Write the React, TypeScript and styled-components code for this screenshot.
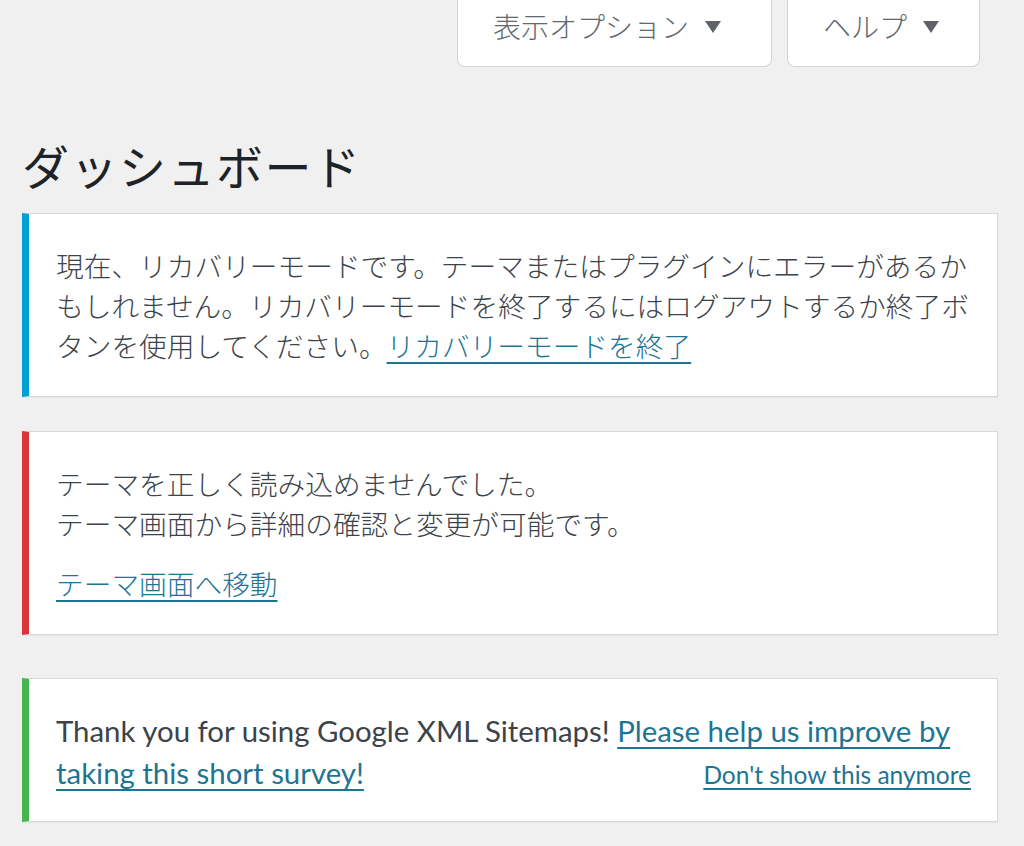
import React from "react";
import styled, { createGlobalStyle } from "styled-components";

const Global = createGlobalStyle`
  html, body {
    margin: 0;
    padding: 0;
    background: #f0f0f1;
  }
  body {
    font-family: "Noto Sans CJK JP", "Noto Sans", sans-serif;
    color: #3c434a;
  }
`;

const Page = styled.div`
  min-height: 846px;
  background: #f0f0f1;
  overflow: hidden;
`;

const MetaLinks = styled.div`
  display: flex;
  justify-content: flex-end;
  gap: 15px;
  padding-right: 44px;
`;

const MetaButton = styled.button<{ $w: number }>`
  display: flex;
  align-items: center;
  justify-content: flex-start;
  gap: 16px;
  width: ${(p) => p.$w}px;
  height: 67px;
  padding: 0 0 14px 35px;
  box-sizing: border-box;
  background: #fff;
  border: 1.5px solid #d2d3d5;
  border-top: none;
  border-radius: 0 0 8px 8px;
  font-family: "Noto Sans CJK JP", sans-serif;
  font-size: 28px;
  font-weight: 300;
  color: #646970;
  cursor: pointer;
`;

const Arrow = styled.span`
  display: inline-block;
  width: 0;
  height: 0;
  margin-top: 2px;
  border-left: 8px solid transparent;
  border-right: 8px solid transparent;
  border-top: 12px solid #5f6368;
`;

const Content = styled.div`
  padding: 0 26px 0 22px;
`;

const Heading = styled.h1`
  margin: 68px 0 18px 0;
  font-family: "Noto Sans CJK JP", sans-serif;
  font-size: 47px;
  font-weight: 400;
  line-height: 60px;
  color: #1d2327;
  letter-spacing: 1.5px;
`;

const Notice = styled.div<{ $color: string; $gap?: number }>`
  background: #fff;
  border: 1.5px solid #d7d8da;
  border-left: 7px solid ${(p) => p.$color};
  box-shadow: 0 1px 1px rgba(0, 0, 0, 0.04);
  padding: 11px 26px 11px 27px;
  margin-bottom: ${(p) => p.$gap ?? 0}px;
`;

const Para = styled.p`
  margin: 20px 0;
  font-family: "Noto Sans CJK JP", sans-serif;
  font-size: 27.7px;
  font-weight: 300;
  line-height: 40px;
  color: #3c434a;
`;

const EnPara = styled.p`
  margin: 20px 0 14px 0;
  font-family: "Lato", "Noto Sans", sans-serif;
  font-size: 29.4px;
  line-height: 42px;
  color: #3c434a;
  &::after {
    content: "";
    display: block;
    clear: both;
  }
`;

const Link = styled.a`
  color: #1e7493;
  text-decoration: underline;
  text-underline-offset: 5px;
  text-decoration-thickness: 2px;
`;

const SmallLink = styled.a`
  float: right;
  margin-top: 2px;
  font-size: 24.5px;
  line-height: 42px;
  color: #1e7493;
  text-decoration: underline;
  text-underline-offset: 4px;
  text-decoration-thickness: 1.5px;
`;

export default function App() {
  return (
    <Page>
      <Global />
      <MetaLinks>
        <MetaButton $w={315}>
          表示オプション
          <Arrow />
        </MetaButton>
        <MetaButton $w={193}>
          ヘルプ
          <Arrow />
        </MetaButton>
      </MetaLinks>
      <Content>
        <Heading>ダッシュボード</Heading>
        <Notice $color="#00a0d2" $gap={34}>
          <Para>
            現在、リカバリーモードです。テーマまたはプラグインにエラーがあるかもしれません。リカバリーモードを終了するにはログアウトするか終了ボタンを使用してください。
            <Link href="#">リカバリーモードを終了</Link>
          </Para>
        </Notice>
        <Notice $color="#d63638" $gap={43}>
          <Para>
            テーマを正しく読み込めませんでした。
            <br />
            テーマ画面から詳細の確認と変更が可能です。
          </Para>
          <Para>
            <Link href="#">テーマ画面へ移動</Link>
          </Para>
        </Notice>
        <Notice $color="#46b450">
          <EnPara>
            Thank you for using Google XML Sitemaps!{" "}
            <Link href="#">Please help us improve by taking this short survey!</Link>
            <SmallLink href="#">Don't show this anymore</SmallLink>
          </EnPara>
        </Notice>
      </Content>
    </Page>
  );
}
